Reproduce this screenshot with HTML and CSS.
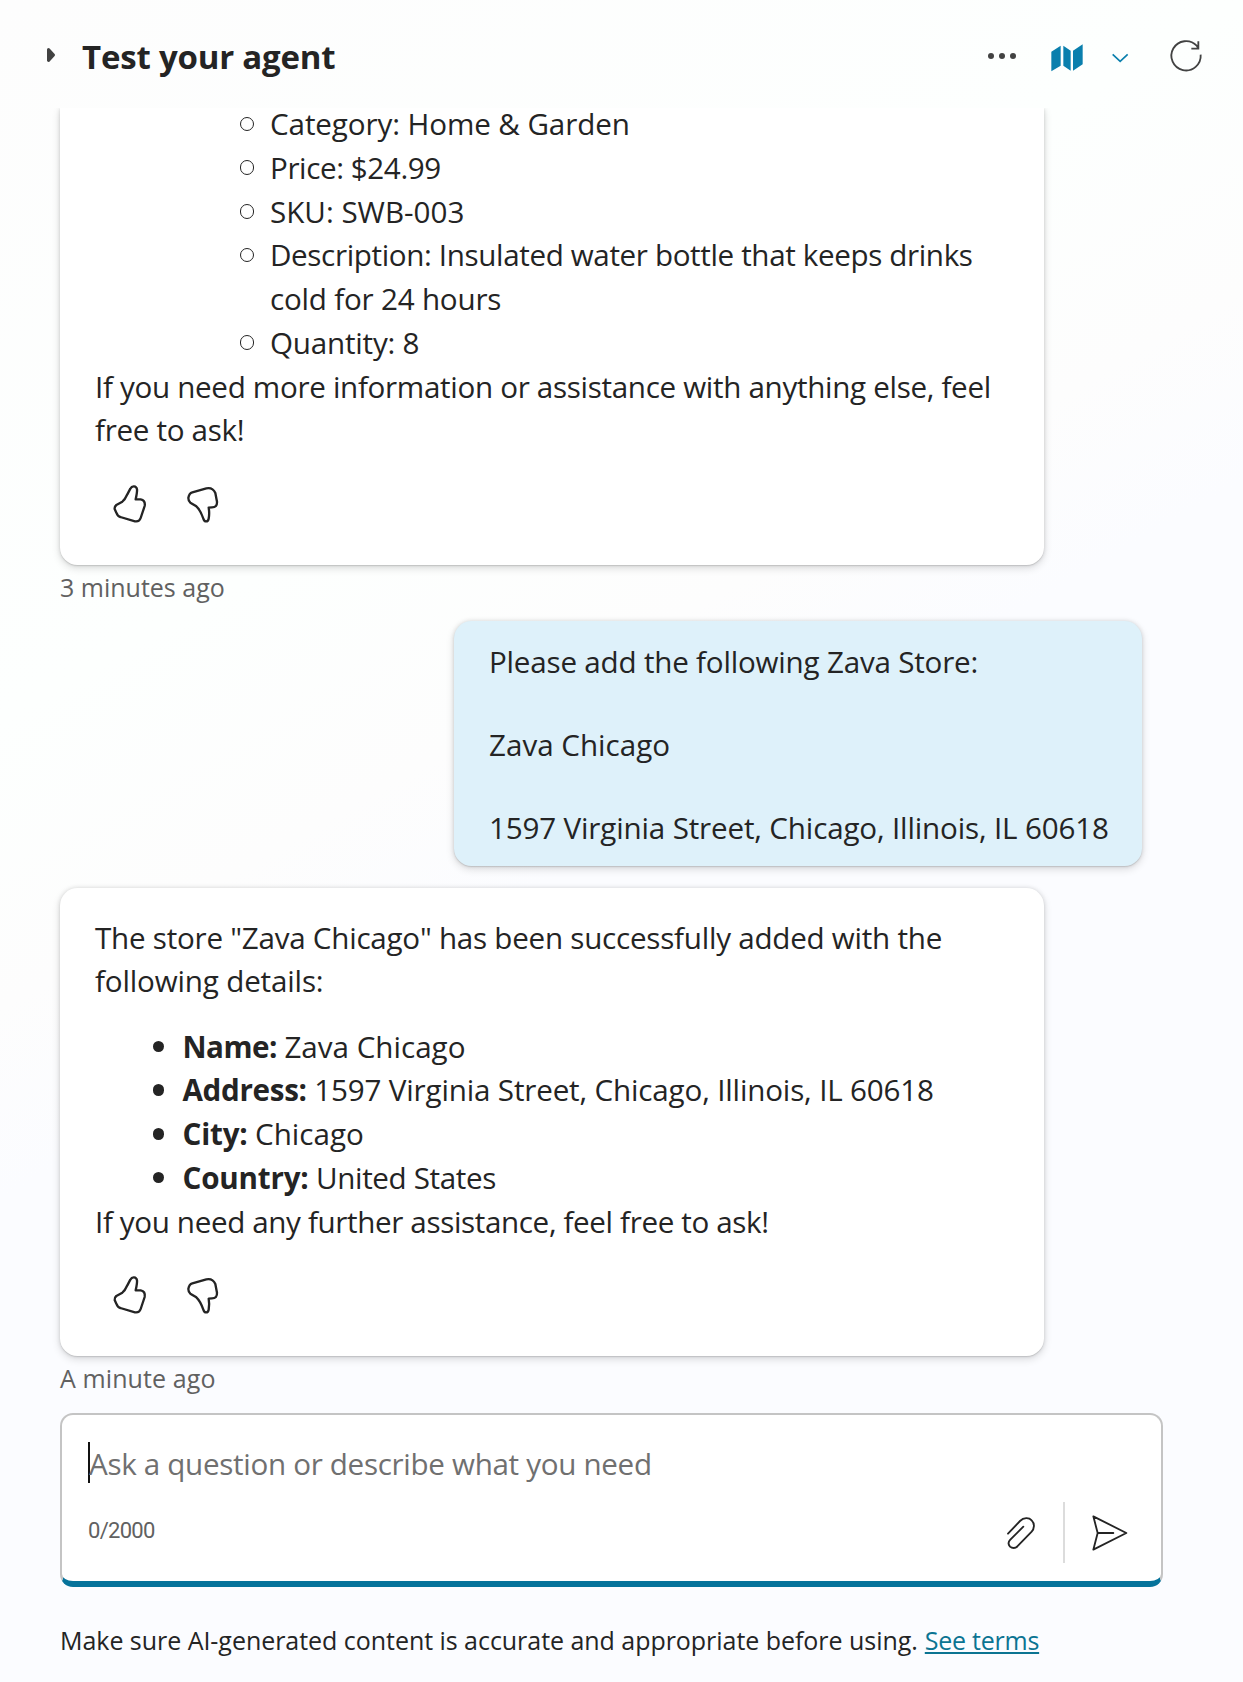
FILE: index.html
```html
<!DOCTYPE html>
<html lang="en">
<head>
<meta charset="utf-8">
<title>Test your agent</title>
<link rel="stylesheet" href="styles.css">
</head>
<body>
<div class="panel">
  <header class="header">
    <svg class="collapse" width="10" height="16" viewBox="0 0 10 16"><path d="M2.500 2.500 7.500 8l-5 5.500z"/></svg>
    <h1 class="title">Test your agent</h1>
    <svg class="dots" width="30" height="8" viewBox="0 0 30 8"><circle cx="4" cy="4" r="3"/><circle cx="15" cy="4" r="3"/><circle cx="26" cy="4" r="3"/></svg>
    <svg class="map" width="34" height="30" viewBox="327 129 102 90"><path d="M331 155 359 137V197L331 214ZM367 137 389 152V212L367 197ZM396 152 425 133V193L396 212Z"/></svg>
    <svg class="chevron" width="18" height="12" viewBox="507 156 54 36"><path d="M512 163 534.500 184 557 163"/></svg>
    <svg class="refresh" width="34" height="34" viewBox="683 116 102 102"><path d="M778 163A44 44 0 1 1 766 136L771 145M771 123V145H750"/></svg>
  </header>

  <main class="chat">
    <section class="card card-cut">
      <ul class="list list-inner">
        <li><span class="ls-10">Category: Home &amp; Garden</span></li>
        <li><span class="ls-40">Price: $24.99</span></li>
        <li><span>SKU: SWB-003</span></li>
        <li><div><span class="ls-36">Description: Insulated water bottle that keeps drinks</span><br><span class="ls-20">cold for 24 hours</span></div></li>
        <li><span class="ls-20">Quantity: 8</span></li>
      </ul>
      <p class="text"><span class="ls-32">If you need more information or assistance with anything else, feel</span><br><span class="ls-32">free to ask!</span></p>
      <div class="actions">
        <svg width="40" height="43.330" viewBox="210 365 120 130"><path d="M271 385C276 375 289 376 291 387Q292 394 287 417H302Q317 420 314 437L302 473Q298 485 285 483L241 470Q233 468 229 457L224 446Q223 439 229 434L247 424Q255 418 262 402Z"/></svg>
        <svg width="40" height="43.330" viewBox="430 365 120 130"><path d="M458 396 500 384Q519 380 527 398L532 424Q533 441 517 441L507 442Q510 459 507 475C505 486 494 486 491 475Q482 449 470 438L452 427Q446 422 446 413Q448 399 458 396Z"/></svg>
      </div>
    </section>
    <div class="time">3 minutes ago</div>

    <section class="bubble">
      <p class="ls-20">Please add the following Zava Store:</p>
      <p>Zava Chicago</p>
      <p class="ls-16">1597 Virginia Street, Chicago, Illinois, IL 60618</p>
    </section>

    <section class="card card-full">
      <p class="text"><span class="ls-24">The store "Zava Chicago" has been successfully added with the</span><br><span class="ls-16">following details:</span></p>
      <ul class="list list-outer">
        <li><b class="ls-50">Name:</b><span>Zava Chicago</span></li>
        <li><b class="ls-32">Address:</b><span class="ls-16">1597 Virginia Street, Chicago, Illinois, IL 60618</span></li>
        <li><b class="ls-20">City:</b><span>Chicago</span></li>
        <li><b class="ls-20">Country:</b><span class="ls-36">United States</span></li>
      </ul>
      <p class="text ls-36">If you need any further assistance, feel free to ask!</p>
      <div class="actions">
        <svg width="40" height="43.330" viewBox="210 365 120 130"><path d="M271 385C276 375 289 376 291 387Q292 394 287 417H302Q317 420 314 437L302 473Q298 485 285 483L241 470Q233 468 229 457L224 446Q223 439 229 434L247 424Q255 418 262 402Z"/></svg>
        <svg width="40" height="43.330" viewBox="430 365 120 130"><path d="M458 396 500 384Q519 380 527 398L532 424Q533 441 517 441L507 442Q510 459 507 475C505 486 494 486 491 475Q482 449 470 438L452 427Q446 422 446 413Q448 399 458 396Z"/></svg>
      </div>
    </section>
    <div class="time time-last">A minute ago</div>
  </main>

  <div class="composer">
    <div class="prompt"><i class="cursor"></i><span class="ls-32">Ask a question or describe what you need</span></div>
    <div class="tools">
      <span class="count">0/2000</span>
      <svg class="clip" width="32" height="38" viewBox="194 342 96 114"><path d="M203 401 239 363C250 352 266 352 274 361C284 371 282 386 274 395L231 439C225 446 215 445 209 440C203 433 204 425 210 419L249 380"/></svg>
      <i class="rule"></i>
      <svg class="send" width="40" height="40" viewBox="448 339 120 120"><path d="M458 349 557 399 458 449 471 399ZM471 399H518"/></svg>
    </div>
  </div>
  <footer class="footer"><span>Make sure AI-generated content is accurate and appropriate before using.</span><a class="ls-24">See terms</a></footer>
</div>
</body>
</html>
```
FILE: styles.css
```css
* { box-sizing: border-box; }
body {
  margin: 0;
  font-family: "Open Sans", "Noto Sans", sans-serif;
  font-size: 29.600px;
  color: #242424;
  white-space: nowrap;
  background: linear-gradient(150deg, #fdfdfd 0%, #fdfffe 30%, #fdfdfd 42%, #fbfcff 50%, #fbfcff 100%);
}
h1, p, ul { margin: 0; padding: 0; }
svg { display: block; flex: none; overflow: visible; }

/* Tracking steps, in hundredths of a pixel */
.ls-10 { letter-spacing: -0.100px; }
.ls-16 { letter-spacing: -0.160px; }
.ls-20 { letter-spacing: -0.200px; }
.ls-24 { letter-spacing: -0.240px; }
.ls-32 { letter-spacing: -0.310px; }
.ls-36 { letter-spacing: -0.360px; }
.ls-40 { letter-spacing: -0.400px; }
.ls-50 { letter-spacing: -0.500px; }

.panel { display: flex; flex-direction: column; height: 1682px; overflow: hidden; }

.header { display: flex; flex: none; align-items: center; height: 108px; padding: 0 40.500px 0 46px; }
.collapse { fill: #424242; stroke: #424242; stroke-width: 3; stroke-linejoin: round; margin-top: 2px; }
.title { flex: 1; padding: 5px 0 0 26px; font-size: 33px; line-height: 44px; font-weight: 700; letter-spacing: -0.200px; }
.dots { fill: #424242; margin: 4px 33px 0 0; }
.map { fill: #0a7fad; margin: 8px 27px 0 0; }
.chevron { fill: none; stroke: #0a7fad; stroke-width: 5; margin: 8px 40px 0 0; }
.refresh { fill: none; stroke: #424242; stroke-width: 5.500; margin-top: 3px; }

.chat { flex: none; height: 1305px; padding-left: 60px; overflow: hidden; }
.card {
  display: flow-root;
  width: 984px;
  padding: 0 35px;
  background: #fff;
  border-radius: 17.500px;
  box-shadow: 0 0 4px rgba(0,0,0,.12), 0 3px 8px rgba(0,0,0,.14), 0 1px 1px rgba(0,0,0,.1);
}
.card-cut { height: 457px; border-top-left-radius: 0; border-top-right-radius: 0; }
.card-full { height: 468px; margin-top: 22px; padding-top: 27.500px; }
.text { line-height: 43.750px; }
.list { list-style: none; line-height: 43.750px; }
.list li { display: flex; }
.list li::before { content: ""; flex: none; border-radius: 50%; }
.list-inner { margin-top: -6px; padding-left: 144.500px; }
.list-inner li::before { width: 12.500px; height: 12.500px; margin: 14.500px 16px 0 0; border: 1.200px solid #242424; }
.list-outer { margin-top: 21.500px; padding-left: 57.500px; }
.list-outer li::before { width: 11.500px; height: 11.500px; margin: 16px 18.500px 0 0; background: #242424; }
.list b { margin-right: 7.500px; }
.actions { display: flex; gap: 33.300px; padding: 30px 0 0 15px; }
.actions svg { fill: none; stroke: #242424; stroke-width: 7; stroke-linejoin: round; }
.time { height: 56px; padding-top: 3.500px; font-size: 25px; line-height: 36px; color: #616161; }
.time-last { padding-top: 4px; letter-spacing: 0.100px; }
.bubble {
  width: 688px;
  height: 245px;
  margin-left: 394px;
  padding: 20px 35px;
  background: #def1fa;
  border-radius: 17.500px;
  line-height: 41.500px;
  box-shadow: 0 0 4px rgba(0,0,0,.12), 0 3px 8px rgba(0,0,0,.14), 0 1px 1px rgba(0,0,0,.1);
}
.bubble p + p { margin-top: 41.500px; }

.composer {
  flex: none;
  width: 1103px;
  height: 174px;
  margin-left: 60px;
  padding: 27px 31px 0 26px;
  background: #fff;
  border: 2px solid #c4c4c4;
  border-bottom: 6px solid #06739b;
  border-radius: 13px;
}
.prompt { display: flex; align-items: flex-start; height: 60px; line-height: 43px; color: #707070; }
.cursor { width: 2px; height: 41px; margin-right: -1px; background: #111; }
.tools { display: flex; align-items: center; height: 61px; }
.count { flex: 1; padding-bottom: 5px; font-family: Roboto, sans-serif; font-size: 22px; letter-spacing: -0.700px; color: #616161; }
.clip { fill: none; stroke: #242424; stroke-width: 5.500; stroke-linecap: round; }
.rule { width: 2px; height: 61px; margin: 0 25px 0 26.500px; background: #dcdcdc; }
.send { fill: none; stroke: #242424; stroke-width: 5.500; stroke-linejoin: round; stroke-linecap: round; }
.footer { display: flex; margin: 35px 0 0 60px; font-size: 25px; line-height: 36px; letter-spacing: -0.040px; }
.footer a { margin-left: 7px; color: #0b7492; text-decoration: underline; text-decoration-thickness: 2px; text-underline-offset: 2px; }
```
